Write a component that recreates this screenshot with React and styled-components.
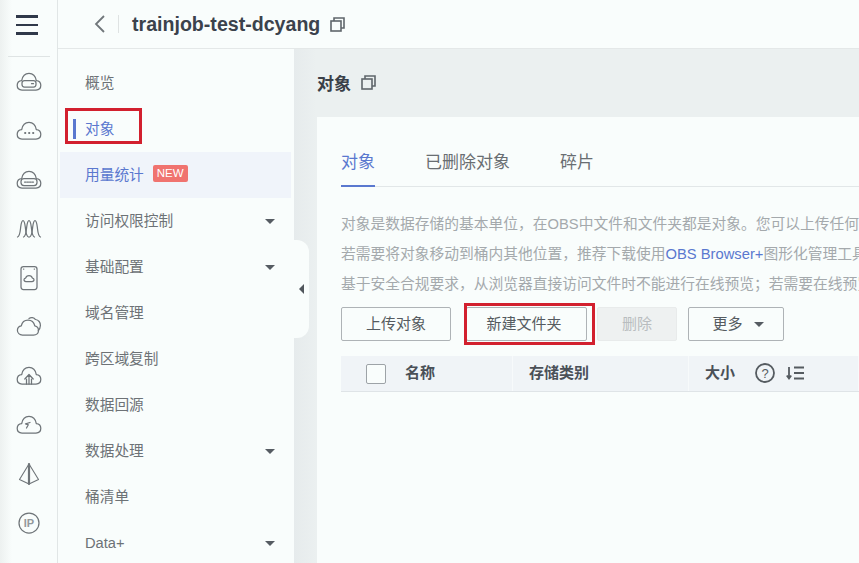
import React from 'react'
import styled, { createGlobalStyle } from 'styled-components'

const FONT = '"Liberation Sans", "Noto Sans CJK SC", sans-serif'
const PAPER = '#f9fdfc'
const BLUE = '#5a78cf'
const RED = '#d2202e'

const GlobalStyle = createGlobalStyle`
  html, body {
    margin: 0;
    height: 100%;
    overflow: hidden;
    background: ${PAPER};
    font-family: ${FONT};
  }
  * { box-sizing: border-box; }
`

const Page = styled.div`
  display: flex;
  width: 859px;
  height: 563px;
  overflow: hidden;
`
const Rail = styled.aside`
  flex: 0 0 58px;
  display: flex;
  flex-direction: column;
  align-items: center;
  background: linear-gradient(90deg, #edf1f0 0, ${PAPER} 12px);
  border-right: 1px solid #e1e6e6;
`
const Burger = styled.div`
  width: 42px;
  height: 57px;
  padding: 15px 0 0 8px;
  border-bottom: 1px solid #dfe4e4;
  span {
    display: block;
    height: 2.5px;
    width: 22px;
    margin-bottom: 6px;
    background: #30394a;
  }
`
const RailIcons = styled.div`
  display: flex;
  flex-direction: column;
  align-items: center;
  padding-top: 12px;
`
const RailIcon = styled.svg`
  width: 26px;
  height: 26px;
  margin-bottom: 23px;
  fill: none;
  stroke: #6f7579;
  stroke-width: 1.25;
  stroke-linejoin: round;
  stroke-linecap: round;
`
const Body = styled.div`
  flex: 1;
  min-width: 0;
  display: flex;
  flex-direction: column;
`
const Header = styled.header`
  flex: 0 0 49px;
  display: flex;
  align-items: center;
  padding-left: 36px;
  background: ${PAPER};
  border-bottom: 1px solid #e4e8e8;
`
const BackLink = styled.svg`
  width: 12px;
  height: 20px;
  fill: none;
  stroke: #70767a;
  stroke-width: 1.8;
`
const HeaderDivider = styled.div`
  width: 1px;
  height: 18px;
  margin: 0 13px 0 12px;
  background: #dfe3e3;
`
const BucketName = styled.h1`
  margin: 0 10px 0 0;
  font-size: 19.6px;
  font-weight: 700;
  color: #3b424c;
  white-space: nowrap;
`
const CopyGlyph = styled.svg`
  width: 15px;
  height: 15px;
  fill: none;
  stroke: #5f666b;
  stroke-width: 1.6;
`
const Columns = styled.div`
  flex: 1;
  min-height: 0;
  display: flex;
`
const Side = styled.nav`
  position: relative;
  flex: 0 0 236px;
  padding-top: 11px;
  background: ${PAPER};
`
const NavRow = styled.div`
  position: relative;
  display: flex;
  align-items: center;
  justify-content: space-between;
  width: 231px;
  height: 46px;
  margin-left: 2px;
  padding: 0 16px 0 25px;
  font-size: 14.7px;
  color: ${(p) => (p.$active ? BLUE : '#6d7276')};
  background: ${(p) => (p.$tinted ? '#f0f4fa' : 'transparent')};
`
const NavLabel = styled.span`
  display: flex;
  align-items: center;
  gap: 9px;
  margin-bottom: ${(p) => (p.$latin ? 0 : 4)}px;
`
const NewBadge = styled.span`
  padding: 1px 4px;
  font-size: 11.5px;
  line-height: 15px;
  color: #fff;
  background: #f0736f;
  border-radius: 2px;
`
const Caret = styled.span`
  width: 0;
  height: 0;
  border-left: 5px solid transparent;
  border-right: 5px solid transparent;
  border-top: 5px solid #565c62;
`
const ActiveBar = styled.span`
  position: absolute;
  left: 13px;
  top: 13px;
  width: 2.5px;
  height: 20px;
  background: ${BLUE};
`
const RedBox = styled.span`
  position: absolute;
  border: 3px solid ${RED};
  pointer-events: none;
`
const NavRedBox = styled(RedBox)`
  left: 5px;
  top: 2px;
  width: 77px;
  height: 36px;
`
const CollapseTab = styled.div`
  position: absolute;
  left: 235px;
  top: 191px;
  width: 16px;
  height: 98px;
  display: flex;
  align-items: center;
  justify-content: center;
  background: ${PAPER};
  border-radius: 0 12px 12px 0;
  &::before {
    content: '';
    border-top: 5px solid transparent;
    border-bottom: 5px solid transparent;
    border-right: 5px solid #50565c;
  }
`
const Main = styled.main`
  flex: 1;
  min-width: 0;
  display: flex;
  flex-direction: column;
  padding-left: 23px;
  background: linear-gradient(90deg, #e6ebec 0, #ebf0f0 22px);
`
const PageTitle = styled.div`
  flex: 0 0 68px;
  display: flex;
  align-items: center;
  gap: 10px;
  padding-bottom: 1px;
  font-size: 17px;
  font-weight: 700;
  color: #3a4048;
`
const Card = styled.section`
  flex: 1;
  padding: 30px 0 0 24px;
  background: ${PAPER};
  overflow: hidden;
`
const Tabs = styled.div`
  display: flex;
  gap: 50px;
  border-bottom: 1px solid #e2e7e8;
`
const Tab = styled.div`
  height: 40px;
  line-height: 32px;
  margin-bottom: -1px;
  font-size: 17px;
  white-space: nowrap;
  color: ${(p) => (p.$active ? BLUE : '#696e72')};
  border-bottom: 2px solid ${(p) => (p.$active ? BLUE : 'transparent')};
`
const Notes = styled.div`
  margin: 22px 0 8px;
  font-size: 14.75px;
  line-height: 30px;
  color: #a4a9ac;
  white-space: nowrap;
  a { color: ${BLUE}; text-decoration: none; }
`
const Toolbar = styled.div`
  display: flex;
  gap: 10px;
`
const Btn = styled.div`
  position: relative;
  flex: 0 0 ${(p) => p.$w}px;
  height: 34px;
  margin-right: ${(p) => p.$after || 0}px;
  padding: 0 ${(p) => p.$right || 0}px 3px ${(p) => p.$left || 0}px;
  display: flex;
  align-items: center;
  justify-content: center;
  gap: 11px;
  font-size: 15px;
  color: ${(p) => (p.$off ? '#b9bdbf' : '#555b60')};
  background: ${(p) => (p.$off ? '#eef1f1' : PAPER)};
  border: 1px solid ${(p) => (p.$off ? '#e8ebeb' : '#aeb3b6')};
  border-radius: 2px;
`
const BtnCaret = styled(Caret)`
  margin-top: 3px;
`
const BtnRedBox = styled(RedBox)`
  left: -3px;
  top: -5px;
  right: -9px;
  bottom: -5px;
`
const TableHead = styled.div`
  display: grid;
  grid-template-columns: 172px 176px 1fr;
  height: 36px;
  margin-top: 15px;
  background: #f0f4f7;
  border-bottom: 1px solid #dfe4e7;
  font-size: 15px;
  font-weight: 700;
  color: #4a5057;
`
const HeadCell = styled.div`
  display: flex;
  align-items: center;
  padding-left: ${(p) => p.$pad}px;
  border-right: 1px solid #f7fafb;
`
const HeadLabel = styled.span`
  margin: 0 ${(p) => p.$after || 0}px 4px ${(p) => p.$before || 0}px;
`
const Check = styled.span`
  width: 20px;
  height: 20px;
  background: ${PAPER};
  border: 1px solid #9da3a7;
  border-radius: 2px;
`
const HeadIcon = styled.svg`
  width: 20px;
  height: 20px;
  margin-right: 10px;
  margin-bottom: 1px;
  fill: none;
  stroke: #555b60;
  stroke-width: 1.8;
`
const HelpText = styled.text`
  font-family: ${FONT};
  font-size: 13px;
  font-weight: 400;
  fill: #555b60;
  stroke: none;
`
const IpMark = styled.text`
  font-family: ${FONT};
  font-size: 11px;
  font-weight: 700;
  fill: #93989b;
  stroke: none;
`

const cloud = 'M6 21H20C23 21 24.8 19 24.8 16.3C24.8 13.8 23 11.8 20.3 11.6C19.5 7.2 16.5 4.4 13 4.4C9.5 4.4 6.5 7.2 5.7 11.6C3 11.8 1.2 13.8 1.2 16.3C1.2 19 3 21 6 21Z'

const bell = (cx) =>
  `M${cx - 5.5} 21C${cx - 3} 20.5 ${cx - 2.8} 15 ${cx - 2.3} 11C${cx - 1.8} 7 ${cx - 1} 4.5 ${cx} 4.5C${cx + 1} 4.5 ${cx + 1.8} 7 ${cx + 2.3} 11C${cx + 2.8} 15 ${cx + 3} 20.5 ${cx + 5.5} 21`

const railGlyphs = [
  <>
    <path d={cloud} />
    <rect x="6" y="11.5" width="14" height="6.5" rx="2.5" />
    <path d="M15.5 14.7h2" />
  </>,
  <>
    <path d={cloud} />
    <path d="M9 15h.4M13 15h.4M17 15h.4" strokeWidth="1.8" />
  </>,
  <>
    <path d={cloud} />
    <rect x="5" y="11.5" width="16" height="7" rx="3" />
    <path d="M8.5 15h9" strokeDasharray="1.5 1" />
  </>,
  <>
    <path d={bell(7)} />
    <path d={bell(13)} />
    <path d={bell(19)} />
  </>,
  <>
    <rect x="5" y="1.5" width="16" height="23" rx="2.5" />
    <path d="M10 16.5H16C17.4 16.5 18 15.6 18 14.8C18 13.8 17.2 13.2 16.4 13.1C16 11.6 14.7 10.6 13 10.6C11.3 10.6 10 11.6 9.6 13.1C8.8 13.2 8 13.8 8 14.8C8 15.6 8.6 16.5 10 16.5Z" />
    <path d="M7.5 4h.3M18.2 4h.3" />
  </>,
  <>
    <path d="M6.5 21H17.5C20.5 21 22.5 19 22.5 16.5C22.5 14 20.8 12.2 18.8 11.8C18 8.3 15.2 6 12 6C8.8 6 6 8.3 5.3 11.8C3 12.2 1.4 14 1.4 16.3C1.4 19 3.5 21 6.5 21Z" />
    <path d="M13 4.5C15 3 18 3.5 19.5 5.5C22.5 5.8 24.6 8.5 24.4 11.5C24.3 13.5 23.5 15.5 22.3 16.5" />
  </>,
  <>
    <path d={cloud} />
    <path d="M13 21V12.5M8.8 16L13 11.5L17.2 16" />
    <path d="M10.5 21V16M15.5 21V16" />
  </>,
  <>
    <path d={cloud} />
    <path d="M10.5 16L12.3 12.8L9.5 11.8L14 10.5" />
  </>,
  <>
    <path d="M13 3L3.5 18.5L13 23L22.5 18.5Z" strokeWidth="1.1" />
    <path d="M13 3V23" strokeWidth="2.2" />
  </>,
  <>
    <circle cx="13" cy="13" r="10" />
    <IpMark x="13" y="17" textAnchor="middle">IP</IpMark>
  </>,
]

const navItems = [
  { label: '概览' },
  { label: '对象', active: true, marked: true },
  { label: '用量统计', active: true, tinted: true, badge: true },
  { label: '访问权限控制', caret: true },
  { label: '基础配置', caret: true },
  { label: '域名管理' },
  { label: '跨区域复制' },
  { label: '数据回源' },
  { label: '数据处理', caret: true },
  { label: '桶清单' },
  { label: 'Data+', caret: true, latin: true },
]

const Copy = () => (
  <CopyGlyph viewBox="0 0 15 15">
    <rect x="1" y="4" width="10" height="10" />
    <path d="M4 4V1H14V11H11" />
  </CopyGlyph>
)

export default function App() {
  return (
    <Page>
      <GlobalStyle />
      <Rail>
        <Burger><span /><span /><span /></Burger>
        <RailIcons>
          {railGlyphs.map((g, i) => (
            <RailIcon key={i} viewBox="0 0 26 26">{g}</RailIcon>
          ))}
        </RailIcons>
      </Rail>
      <Body>
        <Header>
          <BackLink viewBox="0 0 12 20"><path d="M10 2L2 10L10 18" /></BackLink>
          <HeaderDivider />
          <BucketName>trainjob-test-dcyang</BucketName>
          <Copy />
        </Header>
        <Columns>
          <Side>
            {navItems.map((item) => (
              <NavRow key={item.label} $active={item.active} $tinted={item.tinted}>
                {item.marked && <ActiveBar />}
                {item.marked && <NavRedBox />}
                <NavLabel $latin={item.latin}>
                  {item.label}
                  {item.badge && <NewBadge>NEW</NewBadge>}
                </NavLabel>
                {item.caret && <Caret />}
              </NavRow>
            ))}
            <CollapseTab />
          </Side>
          <Main>
            <PageTitle>对象 <Copy /></PageTitle>
            <Card>
              <Tabs>
                <Tab $active>对象</Tab>
                <Tab>已删除对象</Tab>
                <Tab>碎片</Tab>
              </Tabs>
              <Notes>
                <div>对象是数据存储的基本单位，在OBS中文件和文件夹都是对象。您可以上传任何</div>
                <div>若需要将对象移动到桶内其他位置，推荐下载使用<a href="#obs">OBS Browser+</a>图形化管理工具</div>
                <div>基于安全合规要求，从浏览器直接访问文件时不能进行在线预览；若需要在线预览</div>
              </Notes>
              <Toolbar>
                <Btn $w={110} $after={5}>上传对象</Btn>
                <Btn $w={121} $right={5}>新建文件夹<BtnRedBox /></Btn>
                <Btn $w={80} $after={1} $off>删除</Btn>
                <Btn $w={96} $left={4}>更多 <BtnCaret /></Btn>
              </Toolbar>
              <TableHead>
                <HeadCell $pad={25}><Check /><HeadLabel $before={19}>名称</HeadLabel></HeadCell>
                <HeadCell $pad={16}><HeadLabel>存储类别</HeadLabel></HeadCell>
                <HeadCell $pad={16}>
                  <HeadLabel $after={20}>大小</HeadLabel>
                  <HeadIcon viewBox="0 0 20 20">
                    <circle cx="10" cy="10" r="9" />
                    <HelpText x="10" y="14.5" textAnchor="middle">?</HelpText>
                  </HeadIcon>
                  <HeadIcon viewBox="0 0 20 20">
                    <path d="M4 4V15M1.8 12.5L4 15.5L6.2 12.5M9 4.5H19M9 10H19M9 15.5H19" />
                  </HeadIcon>
                </HeadCell>
              </TableHead>
            </Card>
          </Main>
        </Columns>
      </Body>
    </Page>
  )
}
